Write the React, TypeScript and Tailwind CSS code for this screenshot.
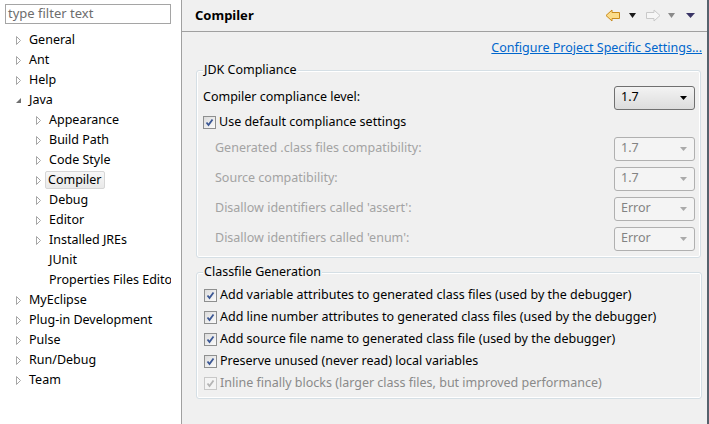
import React from "react";

type TreeItem = { label: string; level: number; kind: "closed" | "open" | "leaf"; selected?: boolean };

const tree: TreeItem[] = [
  { label: "General", level: 0, kind: "closed" },
  { label: "Ant", level: 0, kind: "closed" },
  { label: "Help", level: 0, kind: "closed" },
  { label: "Java", level: 0, kind: "open" },
  { label: "Appearance", level: 1, kind: "closed" },
  { label: "Build Path", level: 1, kind: "closed" },
  { label: "Code Style", level: 1, kind: "closed" },
  { label: "Compiler", level: 1, kind: "closed", selected: true },
  { label: "Debug", level: 1, kind: "closed" },
  { label: "Editor", level: 1, kind: "closed" },
  { label: "Installed JREs", level: 1, kind: "closed" },
  { label: "JUnit", level: 1, kind: "leaf" },
  { label: "Properties Files Editor", level: 1, kind: "leaf" },
  { label: "MyEclipse", level: 0, kind: "closed" },
  { label: "Plug-in Development", level: 0, kind: "closed" },
  { label: "Pulse", level: 0, kind: "closed" },
  { label: "Run/Debug", level: 0, kind: "closed" },
  { label: "Team", level: 0, kind: "closed" },
];

function Twisty({ kind }: { kind: TreeItem["kind"] }) {
  if (kind === "leaf") return <span className="w-[7px] shrink-0" />;
  if (kind === "open")
    return (
      <svg width="7" height="9" viewBox="0 0 7 9" className="shrink-0">
        <path d="M6 2 L6 7 L1 7 Z" fill="#6f6f6f" />
      </svg>
    );
  return (
    <svg width="7" height="9" viewBox="0 0 7 9" className="shrink-0">
      <path d="M1.5 0.5 L5.5 4.5 L1.5 8.5 Z" fill="#fff" stroke="#a6a6a6" />
    </svg>
  );
}

function CheckBox({ disabled }: { disabled?: boolean }) {
  return (
    <span
      className={`flex h-[13px] w-[13px] shrink-0 items-center justify-center border ${
        disabled ? "border-[#c8c8c8] bg-[#f4f4f4]" : "border-[#8e8f8f] bg-gradient-to-br from-[#dcdcdc] to-[#fbfbfb]"
      }`}
    >
      <svg width="9" height="9" viewBox="0 0 9 9">
        <path
          d="M1.5 4.5 L3.5 7 L7.5 1.5"
          fill="none"
          stroke={disabled ? "#b4b4b4" : "#3b5794"}
          strokeWidth="1.8"
        />
      </svg>
    </span>
  );
}

function Combo({ value, disabled }: { value: string; disabled?: boolean }) {
  return (
    <div
      className={`flex h-[24px] w-[81px] items-center justify-between rounded-[3px] border pl-[6px] pr-[7px] ${
        disabled
          ? "border-[#b0b0b0] bg-[#f4f4f4] text-[#838383]"
          : "border-[#707070] bg-gradient-to-b from-[#f3f3f3] to-[#dcdcdc] text-black"
      }`}
    >
      <span>{value}</span>
      <svg width="7" height="4" viewBox="0 0 7 4">
        <path d="M0 0 L7 0 L3.5 4 Z" fill={disabled ? "#aaaaaa" : "#000"} />
      </svg>
    </div>
  );
}

function Arrow({ dir, active }: { dir: "left" | "right"; active: boolean }) {
  const d =
    dir === "left"
      ? "M1 6.5 L7 1 L7 3.5 L14.5 3.5 L14.5 9.5 L7 9.5 L7 12 Z"
      : "M15 6.5 L9 1 L9 3.5 L1.5 3.5 L1.5 9.5 L9 9.5 L9 12 Z";
  return (
    <svg width="16" height="13" viewBox="0 0 16 13">
      <path d={d} fill={active ? "#fbdc8a" : "#f6f6f6"} stroke={active ? "#c88a1c" : "#c9c9c9"} strokeLinejoin="round" />
    </svg>
  );
}

function Tri({ color, w = 7 }: { color: string; w?: number }) {
  return (
    <svg width={w} height="5" viewBox={`0 0 ${w} 5`}>
      <path d={`M0 0 L${w} 0 L${w / 2} 5 Z`} fill={color} />
    </svg>
  );
}

export default function App() {
  return (
    <div className="flex h-[424px] w-[709px] overflow-hidden font-['Noto_Sans'] text-[12.5px] text-black">
      {/* left tree */}
      <div className="w-[181px] shrink-0 overflow-hidden bg-white">
        <div className="ml-[5px] mt-[4px] flex h-[20px] w-[166px] items-center border border-[#a5a5a5] px-[2px] text-[13px] text-[#6d6d6d]">
          type filter text
        </div>
        <div className="mt-[6px] w-[171px] overflow-hidden">
          {tree.map((t) => (
            <div
              key={t.label}
              className="flex h-[20px] items-center whitespace-nowrap"
              style={{ paddingLeft: t.level === 0 ? 15 : 35 }}
            >
              <Twisty kind={t.kind} />
              <span
                className={
                  t.selected
                    ? "ml-[3px] shrink-0 rounded-[2px] border border-[#d6d6d6] bg-gradient-to-b from-[#f7f7f7] to-[#e9e9e9] px-[2px] leading-[16px]"
                    : "ml-[6px] shrink-0 px-[1px]"
                }
              >
                {t.label}
              </span>
            </div>
          ))}
        </div>
      </div>

      <div className="w-px shrink-0 bg-[#a0a0a0]" />

      {/* right page */}
      <div className="flex flex-1 flex-col bg-[#f0f0f0]">
        <div className="flex h-[32px] items-center justify-between border-b border-[#a0a0a0] pl-[13px] pr-[12px]">
          <span className="text-[13px] font-bold">Compiler</span>
          <div className="flex items-center">
            <Arrow dir="left" active />
            <span className="ml-[8px]"><Tri color="#1a1a1a" /></span>
            <span className="ml-[9px]"><Arrow dir="right" active={false} /></span>
            <span className="ml-[7px]"><Tri color="#8a8a8a" /></span>
            <span className="ml-[11px]"><Tri color="#3a3566" w={9} /></span>
          </div>
        </div>

        <div className="flex justify-end pr-[5px] pt-[7px]">
          <span className="text-[#0066cc] underline">Configure Project Specific Settings...</span>
        </div>

        {/* JDK Compliance */}
        <div className="relative ml-[14px] mr-[6px] mt-[12px] h-[188px] rounded-[3px] border border-[#d5dfe5] shadow-[inset_0_0_0_1px_#fff]">
          <span className="absolute -top-[9px] left-[6px] bg-[#f0f0f0] px-[1px] leading-[16px]">JDK Compliance</span>
          <div className="flex flex-col pl-[6px] pr-[5px] pt-[15px]">
            <div className="flex h-[24px] items-center justify-between">
              <span>Compiler compliance level:</span>
              <Combo value="1.7" />
            </div>
            <div className="mt-[2px] flex h-[22px] items-center gap-[3px]">
              <CheckBox />
              <span>Use default compliance settings</span>
            </div>
            {[
              ["Generated .class files compatibility:", "1.7"],
              ["Source compatibility:", "1.7"],
              ["Disallow identifiers called 'assert':", "Error"],
              ["Disallow identifiers called 'enum':", "Error"],
            ].map(([label, val], i) => (
              <div key={label} className={`flex h-[24px] items-center justify-between ${i === 0 ? "mt-[3px]" : "mt-[6px]"}`}>
                <span className="pl-[12px] text-[#a3a3a3]">{label}</span>
                <Combo value={val} disabled />
              </div>
            ))}
          </div>
        </div>

        {/* Classfile Generation */}
        <div className="relative ml-[14px] mr-[5px] mt-[14px] h-[127px] rounded-[3px] border border-[#d5dfe5] shadow-[inset_0_0_0_1px_#fff]">
          <span className="absolute -top-[9px] left-[6px] bg-[#f0f0f0] px-[1px] leading-[16px]">Classfile Generation</span>
          <div className="flex flex-col pl-[7px] pt-[12px]">
            {[
              "Add variable attributes to generated class files (used by the debugger)",
              "Add line number attributes to generated class files (used by the debugger)",
              "Add source file name to generated class file (used by the debugger)",
              "Preserve unused (never read) local variables",
            ].map((l) => (
              <div key={l} className="flex h-[22px] items-center gap-[3px] whitespace-nowrap">
                <CheckBox />
                <span>{l}</span>
              </div>
            ))}
            <div className="flex h-[22px] items-center gap-[3px] whitespace-nowrap text-[#8a8a8a]">
              <CheckBox disabled />
              <span>Inline finally blocks (larger class files, but improved performance)</span>
            </div>
          </div>
        </div>
      </div>

      <div className="w-[2px] shrink-0 bg-[#56626d]" />
    </div>
  );
}
